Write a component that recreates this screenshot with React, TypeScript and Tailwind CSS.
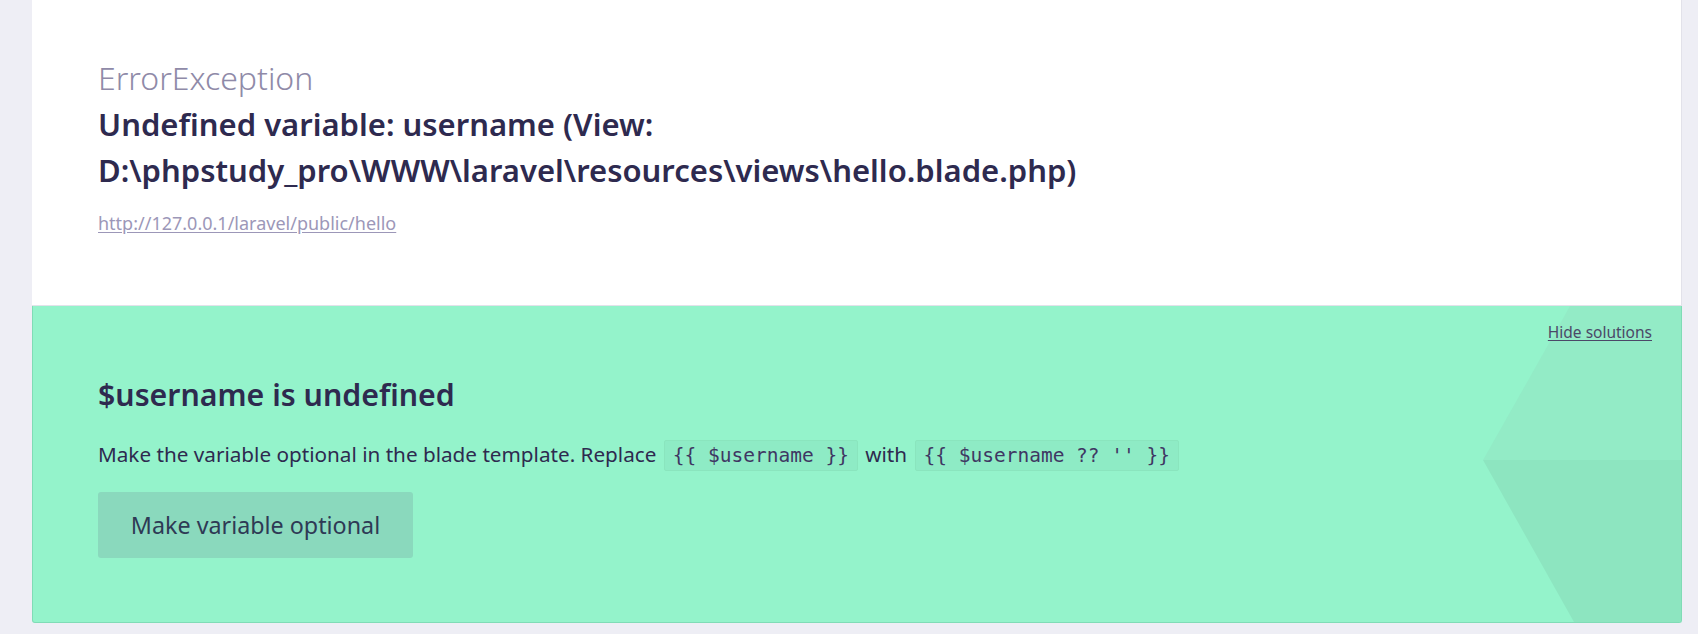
import React from 'react';

const sans = "font-['Noto_Sans','Open_Sans',sans-serif]";

const Code: React.FC<{ children: React.ReactNode }> = ({ children }) => (
  <code className="mx-[2px] inline-block rounded-[2px] border border-[#8ae5be] bg-[#8eebc5] px-[8px] font-['DejaVu_Sans_Mono',monospace] text-[19.5px] leading-[29px] text-[#3f3763]">
    {children}
  </code>
);

export default function App() {
  return (
    <div className={`min-h-[634px] w-full bg-[#eeeef5] pl-[32px] pr-[16px] pb-[11px] ${sans}`}>
      <div className="flex flex-col">
        {/* exception header */}
        <div className="h-[306px] border-b border-r border-[#e2e2ea] bg-white pl-[66px] pt-[58px]">
          <div className="text-[32px] font-light leading-[40px] text-[#8f8aa8]">ErrorException</div>
          <h1 className="mt-[3px] max-w-[1100px] text-[31px] font-semibold leading-[46px] text-[#2e2a4f]">
            Undefined variable: username (View:
            <br />
            D:\phpstudy_pro\WWW\laravel\resources\views\hello.blade.php)
          </h1>
          <a href="#" className="mt-[18px] inline-block text-[18px] leading-[24px] text-[#9c97b8] underline underline-offset-2">
            http://127.0.0.1/laravel/public/hello
          </a>
        </div>

        {/* solution */}
        <div className="relative h-[317px] overflow-hidden rounded-b-[3px] border border-t-0 border-[#80dcb6] bg-[#94f3cb] pl-[65px]">
          <svg className="absolute right-0 top-0 h-full w-[198px]" viewBox="0 0 198 316" preserveAspectRatio="none">
            <polygon points="87,0 198,0 198,154 0,154" fill="#93ebc6" />
            <polygon points="0,154 198,154 198,316 91,316" fill="#8de5c0" />
          </svg>
          <button className="absolute right-[29px] top-[15px] text-[15.5px] leading-[22px] text-[#4b4868] underline underline-offset-2">
            Hide solutions
          </button>
          <div className="relative pt-[69px]">
            <h2 className="text-[30.3px] font-semibold leading-[40px] text-[#2e2a4f]">$username is undefined</h2>
            <p className="mt-[23px] text-[20.7px] leading-[32px] text-[#2e2a4f]">
              Make the variable optional in the blade template. Replace <Code>{'{{ $username }}'}</Code> with{' '}
              <Code>{"{{ $username ?? '' }}"}</Code>
            </p>
            <button className="mt-[21px] h-[66px] w-[315px] rounded-[3px] bg-[#8ad9bd] text-[23.3px] text-[#2e3a55]">
              Make variable optional
            </button>
          </div>
        </div>
      </div>
    </div>
  );
}
